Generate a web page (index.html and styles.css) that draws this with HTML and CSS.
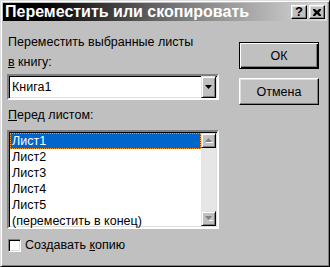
FILE: index.html
```html
<!DOCTYPE html>
<html lang="ru">
<head>
<meta charset="utf-8">
<title>Переместить или скопировать</title>
<link rel="stylesheet" href="styles.css">
</head>
<body>
<div class="window">
  <div class="titlebar">
    <span class="title">Переместить или скопировать</span>
    <div class="caption-buttons">
      <span class="cap-btn help">?</span>
      <span class="cap-btn close">
        <svg width="8" height="7" viewBox="0 0 8 7"><path d="M0 0h2l2 2 2-2h2v1L6 3.5 8 6v1H6L4 5 2 7H0V6l2-2.5L0 1z" fill="#000"/></svg>
      </span>
    </div>
  </div>
  <div class="content">
    <div class="left">
      <div class="label first">Переместить выбранные листы</div>
      <div class="label"><u>в</u> книгу:</div>
      <div class="combo">
        <span class="combo-text">Книга1</span>
        <span class="combo-btn"><svg width="7" height="4" viewBox="0 0 7 4"><path d="M0 0h7L3.5 4z" fill="#000"/></svg></span>
      </div>
      <div class="label before"><u>П</u>еред листом:</div>
      <div class="listbox">
        <div class="items">
          <div class="item selected"><span>Лист1</span></div>
          <div class="item"><span>Лист2</span></div>
          <div class="item"><span>Лист3</span></div>
          <div class="item"><span>Лист4</span></div>
          <div class="item"><span>Лист5</span></div>
          <div class="item"><span>(переместить в конец)</span></div>
        </div>
        <div class="scrollbar">
          <span class="sb-btn"><svg width="8" height="5" viewBox="0 0 8 5"><path d="M3.5 0L7 4H0z" fill="#808080"/><path d="M1 4.5h7" stroke="#fff" stroke-width="1"/></svg></span>
          <span class="sb-track"></span>
          <span class="sb-btn"><svg width="8" height="5" viewBox="0 0 8 5"><path d="M0 0h7L3.5 4z" fill="#808080"/><path d="M4 4.5h4" stroke="#fff" stroke-width="1"/></svg></span>
        </div>
      </div>
      <div class="check-row">
        <span class="checkbox"></span>
        <span class="check-label">Создавать <u>к</u>опию</span>
      </div>
    </div>
    <div class="right">
      <div class="btn default"><span>ОК</span></div>
      <div class="btn"><span>Отмена</span></div>
    </div>
  </div>
</div>
</body>
</html>
```

FILE: styles.css
```css
* { box-sizing: border-box; }
html, body { margin: 0; padding: 0; }
body {
  width: 330px;
  height: 267px;
  background: #c0c0c0;
  font-family: "Liberation Sans", Arial, sans-serif;
  font-size: 12.5px;
  color: #000;
  overflow: hidden;
}
.window {
  width: 330px;
  height: 267px;
  background: #c0c0c0;
  border: 1px solid;
  border-color: #dfdfdf #000 #000 #dfdfdf;
  box-shadow: inset 1px 1px #fff, inset -1px -1px #808080;
  padding: 2px;
  display: flex;
  flex-direction: column;
}
.titlebar {
  height: 18px;
  background: linear-gradient(to right, #000 0%, #000 12%, #7a7a7a 55%, #dcdcdc 100%);
  display: flex;
  align-items: center;
  justify-content: space-between;
  padding-left: 2px;
  padding-right: 2px;
}
.title {
  color: #fff;
  font-weight: bold;
  font-size: 16px;
  line-height: 18px;
  white-space: nowrap;
}
.caption-buttons {
  display: flex;
  gap: 2px;
}
.cap-btn {
  width: 16px;
  height: 14px;
  background: #c0c0c0;
  border: 1px solid;
  border-color: #fff #000 #000 #fff;
  box-shadow: inset -1px -1px #808080, inset 1px 1px #dfdfdf;
  display: flex;
  align-items: center;
  justify-content: center;
  font-weight: bold;
  font-size: 13px;
  line-height: 12px;
}
.content {
  flex: 1;
  display: flex;
  padding: 13px 0 0 4px;
  gap: 20px;
}
.left {
  width: 212px;
  display: flex;
  flex-direction: column;
}
.label {
  line-height: 16px;
  padding-left: 1px;
  white-space: nowrap;
}
.label.first { margin-bottom: 4px; }
.combo {
  margin-top: 4px;
  height: 26px;
  background: #fff;
  border: 2px solid;
  border-color: #808080 #fff #fff #808080;
  box-shadow: inset 1px 1px #000, inset -1px -1px #dfdfdf;
  display: flex;
  align-items: center;
  justify-content: space-between;
  padding: 1px;
}
.combo-text {
  padding-left: 2px;
  line-height: 16px;
}
.combo-btn {
  width: 15px;
  height: 22px;
  background: #c0c0c0;
  border: 1px solid;
  border-color: #dfdfdf #000 #000 #dfdfdf;
  box-shadow: inset 1px 1px #fff, inset -1px -1px #808080;
  display: flex;
  align-items: center;
  justify-content: center;
}
.label.before { margin-top: 7px; }
.listbox {
  margin-top: 7px;
  height: 99px;
  background: #fff;
  border: 2px solid;
  border-color: #808080 #fff #fff #808080;
  box-shadow: inset 1px 1px #000, inset -1px -1px #dfdfdf;
  display: flex;
  padding: 1px;
}
.items {
  flex: 1;
  display: flex;
  flex-direction: column;
}
.item {
  height: 16px;
  line-height: 14px;
  padding: 1px 1px 1px 2px;
  white-space: nowrap;
}
.item.selected {
  background: #0066cc;
  color: #fff;
  outline: 1px dotted #ff9933;
  outline-offset: -1px;
}
.scrollbar {
  width: 15px;
  display: flex;
  flex-direction: column;
  background: #e6e6e6;
}
.sb-btn {
  width: 15px;
  height: 15px;
  background: #c0c0c0;
  border: 1px solid;
  border-color: #dfdfdf #000 #000 #dfdfdf;
  box-shadow: inset 1px 1px #fff, inset -1px -1px #808080;
  display: flex;
  align-items: center;
  justify-content: center;
}
.sb-track { flex: 1; }
.check-row {
  margin-top: 8px;
  display: flex;
  align-items: center;
  gap: 4px;
  padding-left: 1px;
  height: 16px;
}
.checkbox {
  width: 13px;
  height: 13px;
  background: #fff;
  border: 1px solid;
  border-color: #808080 #fff #fff #808080;
  box-shadow: inset 1px 1px #000, inset -1px -1px #dfdfdf;
}
.check-label { line-height: 16px; white-space: nowrap; }
.right {
  width: 80px;
  display: flex;
  flex-direction: column;
  gap: 9px;
  padding-top: 8px;
}
.btn {
  height: 27px;
  background: #c0c0c0;
  border: 1px solid;
  border-color: #fff #000 #000 #fff;
  box-shadow: inset -1px -1px #808080, inset 1px 1px #dfdfdf;
  display: flex;
  align-items: center;
  justify-content: center;
}
.btn.default {
  border: 1px solid #000;
  box-shadow: inset 1px 1px #fff, inset -1px -1px #000, inset -2px -2px #808080;
}
```
